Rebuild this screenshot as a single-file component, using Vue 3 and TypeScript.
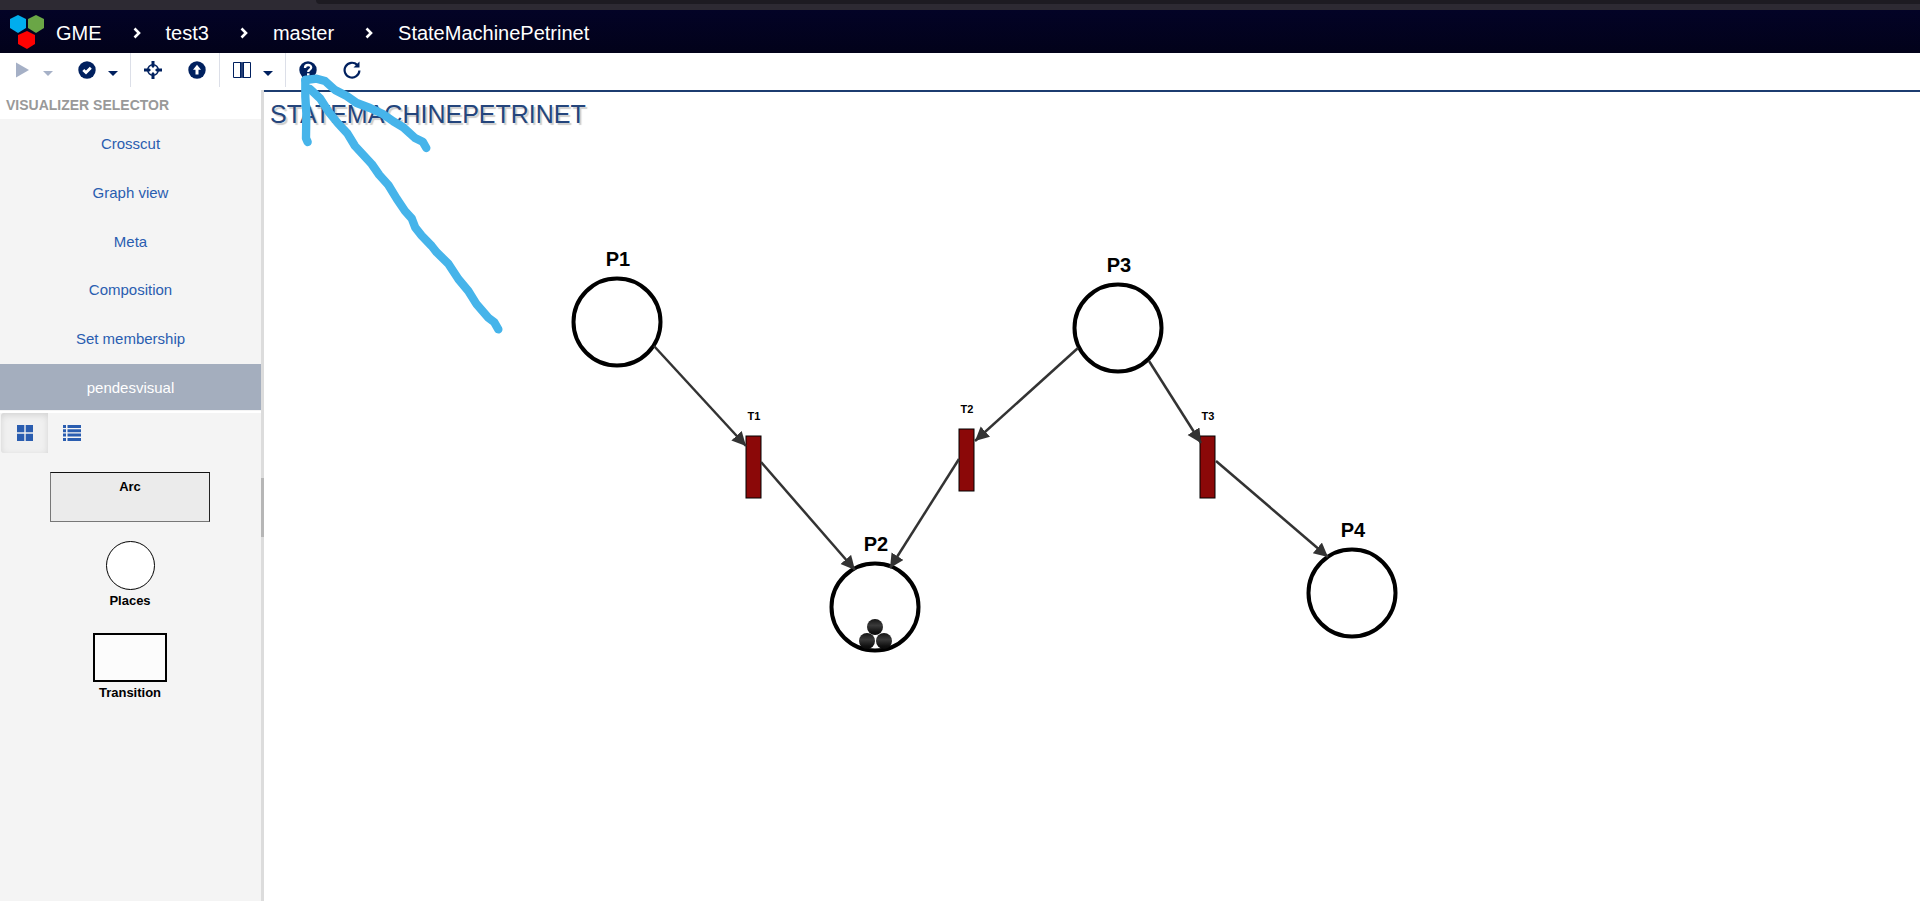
<script setup lang="ts">
import { ref } from 'vue'

interface Place { name: string; x: number; y: number; tokens: number[][] }
interface Transition { name: string; x: number; y: number }

const crumbs = ['GME', 'test3', 'master', 'StateMachinePetrinet']
const visualizers = ['Crosscut', 'Graph view', 'Meta', 'Composition', 'Set membership', 'pendesvisual']
const active = ref('pendesvisual')

const places: Place[] = [
  { name: 'P1', x: 353, y: 230, tokens: [] },
  { name: 'P2', x: 611, y: 515, tokens: [[0, 20], [-8, 34], [9, 34]] },
  { name: 'P3', x: 854, y: 236, tokens: [] },
  { name: 'P4', x: 1088, y: 501, tokens: [] },
]
const transitions: Transition[] = [
  { name: 'T1', x: 482, y: 344 },
  { name: 'T2', x: 695, y: 337 },
  { name: 'T3', x: 936, y: 344 },
]
const arcs = [
  'M390 254L482 354',
  'M497 370L591 478',
  'M814 256L711 349',
  'M695 367L626 476',
  'M885 269L937 351',
  'M952 369L1064 465',
]
</script>

<template>
  <div class="app">
    <div class="window-strip"><div class="window-tabs"></div></div>
    <header class="header">
      <svg class="logo" viewBox="0 0 34 36" aria-hidden="true">
        <path fill="#00adee" d="M8 1l8 4v9l-8 5-8-5V5z" />
        <path fill="#6aa646" d="M26 1l8 4v9l-8 5-8-5V5z" />
        <path fill="#fd0202" d="M17 17l8 4v9l-8 5-9-5v-9z" />
      </svg>
      <nav class="crumbs" aria-label="Breadcrumb">
        <template v-for="(crumb, i) in crumbs" :key="crumb">
          <svg v-if="i > 0" class="chevron" viewBox="0 0 8 12" aria-hidden="true">
            <path d="M1.5 1.5L6 6l-4.500 4.500" fill="none" stroke="#fff" stroke-width="2.600" />
          </svg>
          <a href="#">{{ crumb }}</a>
        </template>
      </nav>
    </header>

    <div class="toolbar" role="toolbar">
      <div class="group">
        <div class="split">
          <button class="tool" aria-label="Run" disabled>
            <svg viewBox="0 0 18 18"><path d="M3 1.500L16 9 3 16.500z" /></svg>
          </button>
          <button class="caret" aria-label="Run options" disabled><i></i></button>
        </div>
        <div class="split">
          <button class="tool" aria-label="Check">
            <svg viewBox="0 0 18 18">
              <circle cx="9" cy="9" r="8.700" />
              <path d="M5.300 9l2.700 2.600 4.800-4.800" fill="none" stroke="#fff" stroke-width="2.800" />
            </svg>
          </button>
          <button class="caret" aria-label="Check options"><i></i></button>
        </div>
      </div>
      <div class="group">
        <button class="tool" aria-label="Locate">
          <svg viewBox="0 0 18 18">
            <circle cx="9" cy="9" r="5.300" fill="none" stroke="#00205f" stroke-width="1.500" />
            <path d="M7.500 0h3v5.500L9 7 7.500 5.500zM7.500 18v-5.500L9 11l1.500 1.500V18zM0 7.500h5.500L7 9l-1.500 1.500H0zM18 7.500h-5.500L11 9l1.500 1.500H18z" />
          </svg>
        </button>
        <button class="tool" aria-label="Go to parent">
          <svg viewBox="0 0 18 18">
            <circle cx="9" cy="9" r="8.700" />
            <path d="M9 3.800L13 8.800H10.500v4.700h-3V8.800H5z" fill="#fff" />
          </svg>
        </button>
      </div>
      <div class="group">
        <div class="split">
          <button class="tool" aria-label="Panels">
            <svg viewBox="0 0 18 18">
              <path d="M.5 1.500h7.500v15H.5zM10 1.500h7.500v15H10z" fill="none" stroke="#00205f" />
              <path d="M7 1h1.700v16H7zM9.300 1H11v16H9.300z" />
            </svg>
          </button>
          <button class="caret" aria-label="Panel options"><i></i></button>
        </div>
      </div>
      <div class="group">
        <button class="tool" aria-label="Help">
          <svg viewBox="0 0 18 18">
            <circle cx="9" cy="9" r="8.700" />
            <path d="M6 7c0-4 6.200-3.800 6.200-.5C12.200 8.700 9.200 8.500 9.200 11" fill="none" stroke="#fff" stroke-width="2.300" />
            <path d="M8 12.300h2.500v2.400H8z" fill="#fff" />
          </svg>
        </button>
        <button class="tool" aria-label="Refresh">
          <svg viewBox="0 0 18 18">
            <path d="M14.200 3.900A7.400 7.400 0 1 0 16.400 9.500" fill="none" stroke="#00205f" stroke-width="2.200" />
            <path d="M16.500 .5V6.500h-6z" />
          </svg>
        </button>
      </div>
    </div>

    <div class="body">
      <aside class="sidebar">
        <h2>VISUALIZER SELECTOR</h2>
        <nav class="visualizers" aria-label="Visualizer selector">
          <a
            v-for="item in visualizers"
            :key="item"
            href="#"
            :class="{ active: item === active }"
            @click.prevent="active = item"
          >{{ item }}</a>
        </nav>
        <section class="parts">
          <div class="views">
            <button class="pressed" aria-label="Grid view">
              <svg viewBox="0 0 18 18"><path d="M1 1h7.300v7.300H1zM9.700 1H17v7.300H9.700zM1 9.700h7.300V17H1zM9.700 9.700H17V17H9.700z" /></svg>
            </button>
            <button aria-label="List view">
              <svg viewBox="0 0 18 18">
                <path d="M0 1h3v3H0zM4.500 1H18v3H4.500zM0 5.300h3v3H0zM4.500 5.300H18v3H4.500zM0 9.600h3v3H0zM4.500 9.600H18v3H4.500zM0 13.900h3v3H0zM4.500 13.900H18v3H4.500z" />
              </svg>
            </button>
          </div>
          <div class="part-list">
            <div class="arc">Arc</div>
            <div class="part"><div class="place"></div>Places</div>
            <div class="part"><div class="box"></div>Transition</div>
          </div>
        </section>
      </aside>
      <div class="splitter"><div class="grip"></div></div>

      <main class="workspace">
        <h1>STATEMACHINEPETRINET</h1>
        <svg class="net" aria-label="Petri net">
          <defs>
            <marker id="tip" markerUnits="userSpaceOnUse" markerWidth="16" markerHeight="16" refX="14" refY="7" orient="auto">
              <path d="M0 0L14 7 0 14z" fill="#333" />
            </marker>
            <linearGradient id="token" x1="0" y1="0" x2="0" y2="1">
              <stop offset="0" stop-color="#151515" />
              <stop offset="0.400" stop-color="#3a3a3a" />
              <stop offset="0.800" stop-color="#121212" />
              <stop offset="1" stop-color="#080808" />
            </linearGradient>
          </defs>
          <g v-for="p in places" :key="p.name">
            <circle :cx="p.x" :cy="p.y" r="43.500" fill="#fff" stroke="#000" stroke-width="4" />
            <circle v-for="(t, i) in p.tokens" :key="i" :cx="p.x + t[0]" :cy="p.y + t[1]" r="8" fill="url(#token)" />
            <text class="place-label" :x="p.x + 1" :y="p.y - 56">{{ p.name }}</text>
          </g>
          <g v-for="t in transitions" :key="t.name">
            <rect :x="t.x" :y="t.y" width="15" height="62" fill="#8b0808" stroke="#000" />
            <text class="transition-label" :x="t.x + 8" :y="t.y - 16">{{ t.name }}</text>
          </g>
          <path v-for="a in arcs" :key="a" :d="a" stroke="#333" stroke-width="2.500" marker-end="url(#tip)" />
        </svg>
      </main>
    </div>

    <svg class="annotation" viewBox="0 0 780 840" aria-hidden="true">
      <path d="M136 60L136 110 139 160 138 235 143 246" />
      <path d="M136 60L170 56 195 63 225 90 260 108 290 129 330 144 370 163 400 184 430 202 465 234 488 245 499 264" />
      <path d="M150 87L180 115 208 158 233 189 262 220 285 258 335 312 358 345 385 375 410 416 435 453 455 475 466 503 485 527 515 558 530 577 565 611 595 657 625 693 650 733 685 773 703 787 715 808" />
    </svg>
  </div>
</template>

<style>
body {
  margin: 0;
}
</style>

<style scoped>
.app {
  position: relative;
  display: flex;
  flex-direction: column;
  min-height: 100vh;
  background: #fff;
  font-family: "Liberation Sans", Arial, sans-serif;
}
.window-strip {
  height: 10px;
  background: #2d2a33;
}
.window-tabs {
  height: 4px;
  margin-left: 316px;
  border-bottom-left-radius: 4px;
  background: #1d1b22;
}
.header {
  display: flex;
  align-items: center;
  height: 43px;
  padding-left: 10px;
  background: linear-gradient(#030326, #02021a);
}
.logo {
  width: 34px;
  height: 36px;
}
.crumbs {
  display: flex;
  align-items: center;
  margin-left: 12px;
  padding-top: 2px;
  font-size: 20px;
  line-height: 24px;
}
.crumbs a {
  color: #fff;
  text-decoration: none;
}
.chevron {
  width: 8px;
  height: 12px;
  margin: 0 25px 0 31px;
}
.toolbar {
  display: flex;
  height: 37px;
}
.group {
  display: flex;
  align-items: center;
  gap: 14px;
  height: 34px;
  padding: 0 7px;
  border-right: 1px solid #dcdfe8;
}
.group:last-child {
  border-right: 0;
}
.split {
  display: flex;
}
button {
  display: flex;
  align-items: center;
  justify-content: center;
  padding: 0;
  border: 0;
  background: none;
}
.tool {
  width: 30px;
  height: 30px;
}
.caret {
  width: 21px;
  height: 30px;
  padding-top: 6px;
}
.caret i {
  border: 5px solid transparent;
  border-top-color: #00205f;
  border-bottom: 0;
}
button svg {
  width: 18px;
  height: 18px;
  fill: #00205f;
}
button:disabled {
  opacity: 0.35;
}
.body {
  display: flex;
  flex: 1;
}
.sidebar {
  display: flex;
  flex-direction: column;
  width: 261px;
  background: #f4f4f4;
}
h2 {
  margin: 0;
  padding: 3px 6px 2px;
  background: #fff;
  color: #999;
  font-size: 14px;
  line-height: 24px;
}
.visualizers {
  display: grid;
  grid-auto-rows: 1fr;
  height: 292px;
}
.visualizers a {
  display: flex;
  align-items: center;
  justify-content: center;
  margin: 2px 0 1px;
  color: #2a5db0;
  font-size: 15px;
  text-decoration: none;
}
.visualizers .active {
  background: #a4aebe;
  color: #fff;
}
.parts {
  border-top: 2px solid #fff;
}
.views {
  display: flex;
  padding-left: 1px;
}
.views button {
  width: 47px;
  height: 40px;
}
.views .pressed {
  border-radius: 3px 0 0 3px;
  background: #f0f0f0;
  box-shadow: inset 0 2px 6px #d2d2d2;
}
.views svg {
  fill: #2a5db0;
}
.part-list {
  display: flex;
  flex-direction: column;
  align-items: center;
  padding: 19px 1px 0 0;
  font-size: 13px;
  font-weight: bold;
  line-height: 20px;
}
.arc {
  box-sizing: border-box;
  width: 160px;
  height: 50px;
  margin-bottom: 19px;
  padding-top: 4px;
  border: 1px solid #222;
  border-color: #111 #222 #777 #777;
  background: #ebebeb;
  text-align: center;
}
.part {
  display: flex;
  flex-direction: column;
  align-items: center;
  margin-bottom: 22px;
}
.place {
  box-sizing: border-box;
  width: 49px;
  height: 49px;
  margin-bottom: 1px;
  border: 1px solid #000;
  border-radius: 50%;
  background: #fff;
}
.box {
  box-sizing: border-box;
  width: 74px;
  height: 49px;
  margin-bottom: 1px;
  border: 2px solid #000;
  background: #fcfcfc;
}
.splitter {
  display: flex;
  flex-direction: column;
  justify-content: center;
  width: 3px;
  background: #dcdcdc;
}
.grip {
  height: 59px;
  margin-bottom: -24px;
  background: #b6b6b6;
}
.workspace {
  display: flex;
  flex: 1;
  flex-direction: column;
  min-width: 0;
  border-top: 2px solid #1c3c70;
}
h1 {
  margin: 0;
  padding: 6px 6px 0;
  color: #24457c;
  font-size: 25px;
  font-weight: normal;
  line-height: 32px;
  text-shadow: 2px 2px 1px #ccc;
}
.net {
  flex: 1;
  width: 100%;
  min-height: 640px;
  margin-top: -38px;
}
text {
  font-weight: bold;
  text-anchor: middle;
}
.place-label {
  font-size: 20px;
}
.transition-label {
  font-size: 11px;
}
.annotation {
  position: absolute;
  top: 60px;
  left: 260px;
  width: 260px;
  height: 280px;
  pointer-events: none;
}
.annotation path {
  fill: none;
  stroke: #46b4ea;
  stroke-width: 25;
  stroke-linecap: round;
  stroke-linejoin: round;
}
</style>
